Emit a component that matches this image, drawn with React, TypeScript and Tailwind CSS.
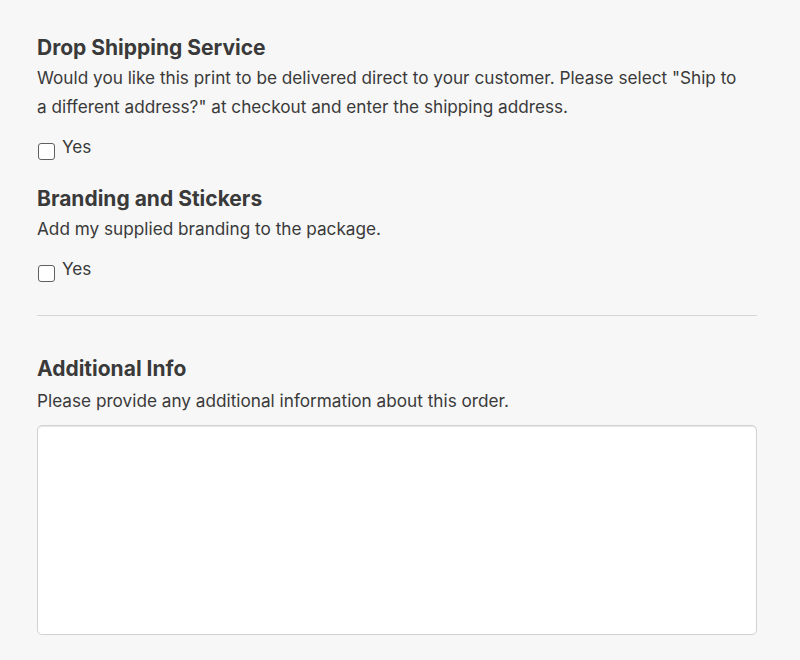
import { useState } from 'react'

function YesCheckbox() {
  const [checked, setChecked] = useState(false)
  return (
    <label className="flex items-start gap-[7px] text-[17.2px] leading-[28.8px] text-[#3a3a3a] cursor-pointer">
      <input
        type="checkbox"
        checked={checked}
        onChange={() => setChecked(!checked)}
        className="mt-[10px] ml-[1px] w-[17px] h-[17px] appearance-none rounded-[3px] border border-[#5f5f5f] bg-white checked:bg-[#3a3a3a]"
      />
      <span>Yes</span>
    </label>
  )
}

function Section({ title, text, mt }: { title: string; text: string; mt?: string }) {
  return (
    <div className={mt}>
      <h3 className="text-[21px] leading-[28px] font-bold text-[#3a3a3a]">{title}</h3>
      <p className="mt-[2px] max-w-[706px] text-[17.2px] leading-[28.8px] text-[#3a3a3a]">{text}</p>
      <div className="mt-[11px]">
        <YesCheckbox />
      </div>
    </div>
  )
}

export default function App() {
  return (
    <div className="min-h-[660px] bg-[#f7f7f7] px-[37px] pt-[34px] pb-[24px] font-['Inter',sans-serif]">
      <div className="w-[720px]">
        <Section
          title="Drop Shipping Service"
          text={'Would you like this print to be delivered direct to your customer. Please select "Ship to a different address?" at checkout and enter the shipping address.'}
        />
        <Section
          mt="mt-[24px]"
          title="Branding and Stickers"
          text="Add my supplied branding to the package."
        />

        <hr className="mt-[31px] border-0 border-t border-[#d6d6d6]" />

        <div className="mt-[39px]">
          <h3 className="text-[21px] leading-[28px] font-bold text-[#3a3a3a]">Additional Info</h3>
          <p className="mt-[4px] text-[17.2px] leading-[28.8px] text-[#3a3a3a]">
            Please provide any additional information about this order.
          </p>
          <textarea className="mt-[9px] block w-full h-[210px] resize-none rounded-[5px] border border-[#d2d2d2] bg-white shadow-[inset_0_1px_1px_rgba(0,0,0,0.1)] outline-none p-3 text-[16px]" />
        </div>
      </div>
    </div>
  )
}
